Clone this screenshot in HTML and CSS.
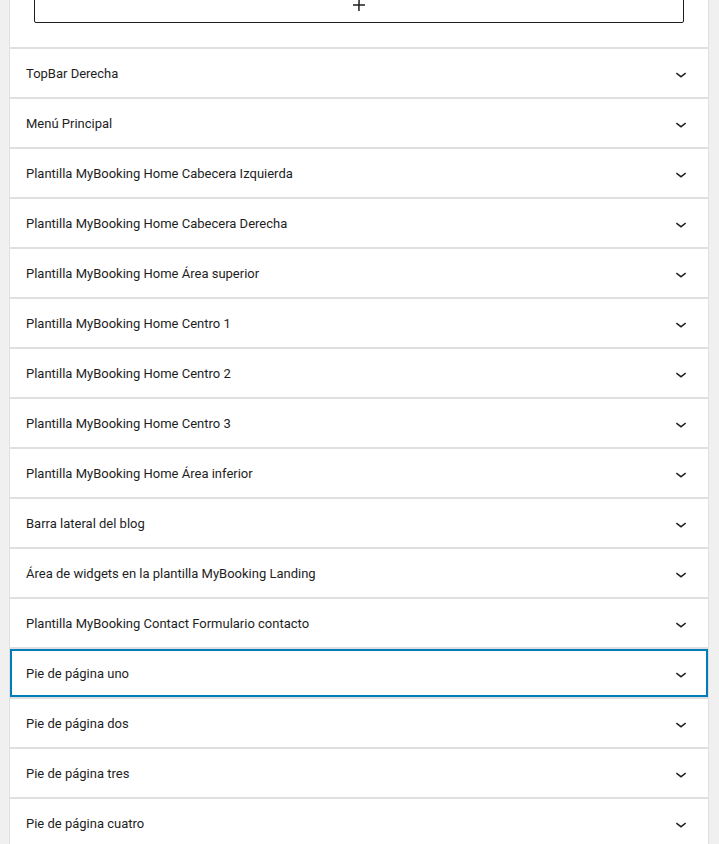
FILE: index.html
```html
<!DOCTYPE html>
<html lang="es">
<head>
<meta charset="utf-8">
<title>Widgets</title>
<link rel="stylesheet" href="styles.css">
</head>
<body>
<div class="panel">
  <div class="top">
    <button class="appender" type="button" aria-label="Añadir bloque">
      <svg viewBox="0 0 24 24" width="24" height="24"><path d="M18 11.2h-5.2V6h-1.5v5.2H6v1.5h5.2V18h1.5v-5.2H18z"/></svg>
    </button>
  </div>
  <div class="area"><span class="title">TopBar Derecha</span><svg class="chev" viewBox="0 0 24 24" width="22" height="22"><path d="M17.5 11.6L12 16l-5.5-4.4.9-1.2L12 14l4.6-3.6 1 1.2z"/></svg></div>
  <div class="area"><span class="title">Menú Principal</span><svg class="chev" viewBox="0 0 24 24" width="22" height="22"><path d="M17.5 11.6L12 16l-5.5-4.4.9-1.2L12 14l4.6-3.6 1 1.2z"/></svg></div>
  <div class="area"><span class="title">Plantilla MyBooking Home Cabecera Izquierda</span><svg class="chev" viewBox="0 0 24 24" width="22" height="22"><path d="M17.5 11.6L12 16l-5.5-4.4.9-1.2L12 14l4.6-3.6 1 1.2z"/></svg></div>
  <div class="area"><span class="title">Plantilla MyBooking Home Cabecera Derecha</span><svg class="chev" viewBox="0 0 24 24" width="22" height="22"><path d="M17.5 11.6L12 16l-5.5-4.4.9-1.2L12 14l4.6-3.6 1 1.2z"/></svg></div>
  <div class="area"><span class="title">Plantilla MyBooking Home Área superior</span><svg class="chev" viewBox="0 0 24 24" width="22" height="22"><path d="M17.5 11.6L12 16l-5.5-4.4.9-1.2L12 14l4.6-3.6 1 1.2z"/></svg></div>
  <div class="area"><span class="title">Plantilla MyBooking Home Centro 1</span><svg class="chev" viewBox="0 0 24 24" width="22" height="22"><path d="M17.5 11.6L12 16l-5.5-4.4.9-1.2L12 14l4.6-3.6 1 1.2z"/></svg></div>
  <div class="area"><span class="title">Plantilla MyBooking Home Centro 2</span><svg class="chev" viewBox="0 0 24 24" width="22" height="22"><path d="M17.5 11.6L12 16l-5.5-4.4.9-1.2L12 14l4.6-3.6 1 1.2z"/></svg></div>
  <div class="area"><span class="title">Plantilla MyBooking Home Centro 3</span><svg class="chev" viewBox="0 0 24 24" width="22" height="22"><path d="M17.5 11.6L12 16l-5.5-4.4.9-1.2L12 14l4.6-3.6 1 1.2z"/></svg></div>
  <div class="area"><span class="title">Plantilla MyBooking Home Área inferior</span><svg class="chev" viewBox="0 0 24 24" width="22" height="22"><path d="M17.5 11.6L12 16l-5.5-4.4.9-1.2L12 14l4.6-3.6 1 1.2z"/></svg></div>
  <div class="area"><span class="title">Barra lateral del blog</span><svg class="chev" viewBox="0 0 24 24" width="22" height="22"><path d="M17.5 11.6L12 16l-5.5-4.4.9-1.2L12 14l4.6-3.6 1 1.2z"/></svg></div>
  <div class="area"><span class="title">Área de widgets en la plantilla MyBooking Landing</span><svg class="chev" viewBox="0 0 24 24" width="22" height="22"><path d="M17.5 11.6L12 16l-5.5-4.4.9-1.2L12 14l4.6-3.6 1 1.2z"/></svg></div>
  <div class="area"><span class="title">Plantilla MyBooking Contact Formulario contacto</span><svg class="chev" viewBox="0 0 24 24" width="22" height="22"><path d="M17.5 11.6L12 16l-5.5-4.4.9-1.2L12 14l4.6-3.6 1 1.2z"/></svg></div>
  <div class="area focused"><span class="title">Pie de página uno</span><svg class="chev" viewBox="0 0 24 24" width="22" height="22"><path d="M17.5 11.6L12 16l-5.5-4.4.9-1.2L12 14l4.6-3.6 1 1.2z"/></svg></div>
  <div class="area"><span class="title">Pie de página dos</span><svg class="chev" viewBox="0 0 24 24" width="22" height="22"><path d="M17.5 11.6L12 16l-5.5-4.4.9-1.2L12 14l4.6-3.6 1 1.2z"/></svg></div>
  <div class="area"><span class="title">Pie de página tres</span><svg class="chev" viewBox="0 0 24 24" width="22" height="22"><path d="M17.5 11.6L12 16l-5.5-4.4.9-1.2L12 14l4.6-3.6 1 1.2z"/></svg></div>
  <div class="area"><span class="title">Pie de página cuatro</span><svg class="chev" viewBox="0 0 24 24" width="22" height="22"><path d="M17.5 11.6L12 16l-5.5-4.4.9-1.2L12 14l4.6-3.6 1 1.2z"/></svg></div>
</div>
</body>
</html>
```

FILE: styles.css
```css
html, body {
  margin: 0;
  padding: 0;
  background: #f0f0f1;
  font-family: Roboto, "Liberation Sans", Arial, sans-serif;
  color: #1e1e1e;
  overflow: hidden;
}

.panel {
  margin-left: 9px;
  width: 698px;
  border-left: 1px solid #e0e0e0;
  border-right: 1px solid #e0e0e0;
  background: #e0e0e0;
}

.top {
  background: #fff;
  padding: 0 24px 24px 24px;
  margin-top: -16px;
}

.appender {
  display: flex;
  align-items: center;
  justify-content: center;
  width: 100%;
  height: 39px;
  padding: 0;
  margin: 0;
  border: 1px solid #1e1e1e;
  border-radius: 2px;
  background: #fff;
  box-sizing: border-box;
}

.appender svg {
  fill: #1e1e1e;
  display: block;
  margin-top: 2px;
}

.area {
  margin-top: 2px;
  height: 48px;
  box-sizing: border-box;
  background: #fff;
  display: flex;
  align-items: center;
  justify-content: space-between;
  padding: 0 16px 0 16px;
  font-size: 13px;
}

.area.focused {
  box-shadow: inset 0 0 0 2px #007cba;
}

.title {
  line-height: 20px;
  padding-top: 2px;
}

.chev {
  fill: #1e1e1e;
  display: block;
  margin-top: 2px;
}
```
